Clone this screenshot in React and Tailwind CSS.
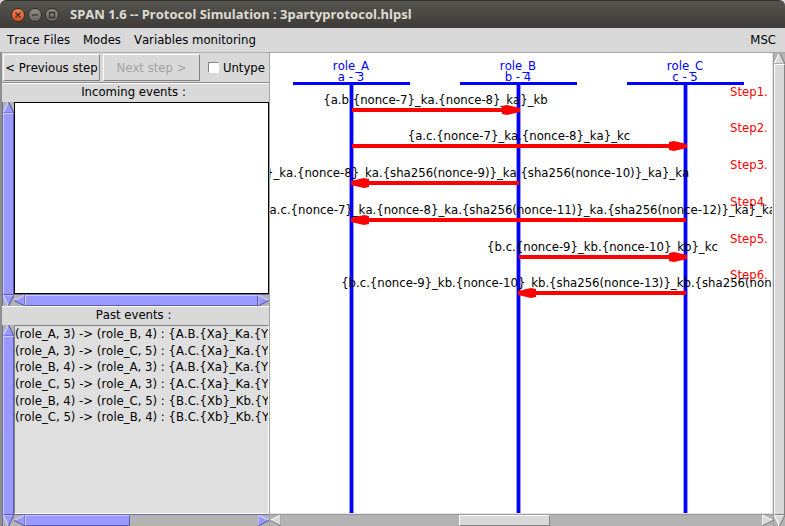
import React from "react";

const lifelines = [
  { role: "role_A", agent: "a - 3", x: 81 },
  { role: "role_B", agent: "b - 4", x: 248 },
  { role: "role_C", agent: "c - 5", x: 415 },
];

const messages = [
  { from: 0, to: 1, y: 57, text: "{a.b.{nonce-7}_ka.{nonce-8}_ka}_kb" },
  { from: 0, to: 2, y: 93, text: "{a.c.{nonce-7}_ka.{nonce-8}_ka}_kc" },
  { from: 1, to: 0, y: 130, text: "{a.b.{nonce-7}_ka.{nonce-8}_ka.{sha256(nonce-9)}_ka.{sha256(nonce-10)}_ka}_ka" },
  { from: 2, to: 0, y: 167, text: "{a.c.{nonce-7}_ka.{nonce-8}_ka.{sha256(nonce-11)}_ka.{sha256(nonce-12)}_ka}_ka" },
  { from: 1, to: 2, y: 204, text: "{b.c.{nonce-9}_kb.{nonce-10}_kb}_kc" },
  { from: 2, to: 1, y: 240, text: "{b.c.{nonce-9}_kb.{nonce-10}_kb.{sha256(nonce-13)}_kb.{sha256(nonce-14)}_kb}_kb" },
];

const pastEvents = [
  "(role_A, 3) -> (role_B, 4) : {A.B.{Xa}_Ka.{Ya}_Ka}_Kb",
  "(role_A, 3) -> (role_C, 5) : {A.C.{Xa}_Ka.{Ya}_Ka}_Kc",
  "(role_B, 4) -> (role_A, 3) : {A.B.{Xa}_Ka.{Ya}_Ka}_Ka",
  "(role_C, 5) -> (role_A, 3) : {A.C.{Xa}_Ka.{Ya}_Ka}_Ka",
  "(role_B, 4) -> (role_C, 5) : {B.C.{Xb}_Kb.{Yb}_Kb}_Kc",
  "(role_C, 5) -> (role_B, 4) : {B.C.{Xb}_Kb.{Yb}_Kb}_Kb",
];

const arrowShapes = {
  up: { points: "5,0 10,10 0,10", light: "M5 0 L0 10", dark: "M5 0 L10 10 H0" },
  down: { points: "0,0 10,0 5,10", light: "M5 10 L0 0 H10", dark: "M10 0 L5 10" },
  left: { points: "0,5 10,0 10,10", light: "M0 5 L10 0", dark: "M10 0 V10 L0 5" },
  right: { points: "0,0 10,5 0,10", light: "M0 10 V0 L10 5", dark: "M10 5 L0 10" },
};

function ScrollArrow({ dir, blue }) {
  const s = arrowShapes[dir];
  return (
    <button type="button" aria-label={`Scroll ${dir}`} className="block size-[11px] shrink-0">
      <svg viewBox="0 0 10 10" className="block size-full">
        <polygon points={s.points} fill={blue ? "#9999ff" : "#d9d9d9"} />
        <path d={s.light} fill="none" stroke={blue ? "#d5d5ff" : "#ffffff"} />
        <path d={s.dark} fill="none" stroke={blue ? "#5c5ca8" : "#828282"} />
      </svg>
    </button>
  );
}

function ScrollBar({ vertical, blue, start = 0, size = 100 }) {
  const thumb = blue
    ? "bg-[#9999ff] border-t-[#ccccff] border-l-[#ccccff] border-b-[#5c5ca8] border-r-[#5c5ca8]"
    : "bg-[#d9d9d9] border-t-white border-l-white border-b-[#828282] border-r-[#828282]";
  return (
    <div
      className={`flex shrink-0 bg-[#b3b3b3] ${vertical ? "w-3 flex-col border-l" : "h-3 border-t"} ${
        blue ? "border-[#6b6bb3]" : "border-[#999999]"
      }`}
    >
      <ScrollArrow dir={vertical ? "up" : "left"} blue={blue} />
      <div className={`flex min-h-0 min-w-0 flex-1 ${vertical ? "flex-col" : ""}`}>
        <div className="shrink-0" style={{ flexBasis: `${start}%` }} />
        <div className={`shrink-0 border ${thumb}`} style={{ flexBasis: `${size}%` }} />
      </div>
      <ScrollArrow dir={vertical ? "down" : "right"} blue={blue} />
    </div>
  );
}

function EventPane({ title, className, listClass, thumb, children }) {
  return (
    <section className={`flex min-h-0 flex-col ${className}`}>
      <h2 className="h-[19px] shrink-0 border-t border-white pr-1 text-center leading-4">{title}</h2>
      <div className="flex min-h-0 flex-1">
        <ScrollBar vertical blue />
        <div className="flex min-w-0 flex-1 flex-col">
          <div className={`min-h-0 flex-1 overflow-hidden border ${listClass}`}>{children}</div>
          <ScrollBar blue size={thumb} />
        </div>
      </div>
    </section>
  );
}

function SequenceChart() {
  return (
    <svg className="block h-full w-full" fontSize="13" role="img" aria-label="Message sequence chart">
      {lifelines.map((l) => (
        <g key={l.role} fill="#0000ff" textAnchor="middle">
          <text x={l.x} y="17">{l.role}</text>
          <text x={l.x} y="28">{l.agent}</text>
          <rect x={l.x - 58} y="29" width="117" height="3" />
          <rect x={l.x - 2} y="32" width="5" height="429" opacity="0.4" />
          <rect x={l.x - 1} y="29" width="3" height="432" />
        </g>
      ))}
      {messages.map((m, i) => {
        const x1 = lifelines[m.from].x + 1;
        const x2 = lifelines[m.to].x + 1;
        const d = x2 > x1 ? 1 : -1;
        return (
          <g key={m.y}>
            <text x="460" y={m.y - 14} fill="#ff0000">{`Step${i + 1}.`}</text>
            <text x={(x1 + x2) / 2} y={m.y - 6} textAnchor="middle">{m.text}</text>
            <line x1={x1} y1={m.y} x2={x2 - d * 3} y2={m.y} stroke="#ff0000" strokeWidth="4" />
            <polygon
              fill="#ff0000"
              points={`${x2 + d},${m.y - 2} ${x2 - d * 12},${m.y - 5} ${x2 - d * 17},${m.y - 4} ${x2 - d * 17},${m.y + 4} ${x2 - d * 12},${m.y + 5} ${x2 + d},${m.y + 2}`}
            />
          </g>
        );
      })}
    </svg>
  );
}

function WindowButton({ label, close, children }) {
  return (
    <button
      type="button"
      aria-label={label}
      className={`size-[14px] rounded-full border border-[#2f2e2a] ${
        close ? "bg-linear-to-b from-[#f58058] to-[#df4a16]" : "bg-linear-to-b from-[#918f87] to-[#68665f]"
      }`}
    >
      <svg viewBox="0 0 12 12" className="block size-full" fill="none" stroke="#35332e" strokeWidth="1.3">
        {children}
      </svg>
    </button>
  );
}

export default function App() {
  return (
    <div className="flex h-screen flex-col overflow-hidden bg-[#d9d9d9] font-['DejaVu_Sans_Condensed','DejaVu_Sans',sans-serif] text-[13px] text-black [font-kerning:none]">
      <header className="flex h-7 shrink-0 items-center gap-[3px] rounded-t-md border-t border-[#33322e] bg-linear-to-b from-[#56554f] to-[#3c3b37] pl-[11px]">
        <WindowButton label="Close" close>
          <path d="M3.5 3.5 L8.5 8.5 M8.5 3.5 L3.5 8.5" />
        </WindowButton>
        <WindowButton label="Minimize">
          <path d="M3 6 H9" />
        </WindowButton>
        <WindowButton label="Maximize">
          <path d="M3.5 3.5 H8.5 V8.5 H3.5 Z" />
        </WindowButton>
        <h1 className="pl-2 font-['Noto_Sans','Open_Sans',sans-serif] text-[13px] font-bold text-[#dfdbd2]">
          SPAN 1.6 -- Protocol Simulation : 3partyprotocol.hlpsl
        </h1>
      </header>

      <nav className="flex h-6 shrink-0 items-center gap-[13px] pr-[9px] pl-[7px]">
        <button type="button">Trace Files</button>
        <button type="button">Modes</button>
        <button type="button">Variables monitoring</button>
        <button type="button" className="ml-auto">MSC</button>
      </nav>

      <main className="flex min-h-0 flex-1 border-l-2 border-[#8f8f8f]">
        <div className="flex w-[267px] shrink-0 flex-col border-t border-[#b0b0b0]">
          <div className="flex h-[30px] shrink-0 items-center gap-[3px] border-b border-[#8a8a8a] px-px">
            <button
              type="button"
              className="h-[27px] w-[97px] border border-t-white border-r-[#828282] border-b-[#828282] border-l-white whitespace-nowrap"
            >
              &lt; Previous step
            </button>
            <button
              type="button"
              disabled
              className="h-[27px] w-[97px] border border-t-white border-r-[#828282] border-b-[#828282] border-l-white whitespace-nowrap text-[#a3a3a3]"
            >
              Next step &gt;
            </button>
            <label className="ml-auto flex items-center gap-1 pr-[3px]">
              <input
                type="checkbox"
                className="size-[11px] appearance-none border border-t-[#828282] border-r-white border-b-white border-l-[#828282] bg-white"
              />
              Untype
            </label>
          </div>
          <EventPane
            title="Incoming events :"
            className="h-[223px] shrink-0"
            listClass="border-black bg-white"
            thumb={100}
          />
          <EventPane
            title="Past events :"
            className="flex-1"
            listClass="border-t-[#828282] border-r-white border-b-white border-l-[#828282] bg-[#dfdfdf]"
            thumb={45}
          >
            <ul className="grid h-[100px] grid-rows-6 leading-4">
              {pastEvents.map((e) => (
                <li key={e} className="whitespace-nowrap">{e}</li>
              ))}
            </ul>
          </EventPane>
        </div>

        <div className="flex min-w-0 flex-1 border-t border-l border-[#a5a5a5]">
          <div className="flex min-w-0 flex-1 flex-col">
            <div className="min-h-0 flex-1 overflow-hidden border-r border-b border-[#e5e5e5] bg-white">
              <SequenceChart />
            </div>
            <ScrollBar start={37} size={19} />
          </div>
          <ScrollBar vertical />
        </div>
      </main>
    </div>
  );
}
